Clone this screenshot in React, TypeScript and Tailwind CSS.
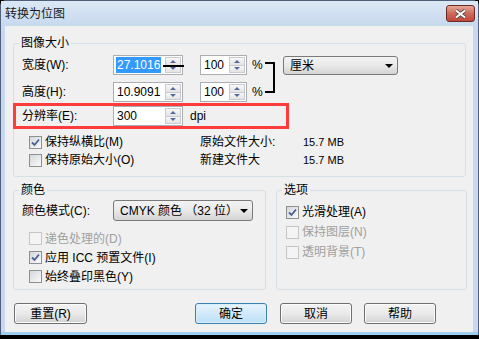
import React from 'react';

const font = "font-['Liberation_Sans','Noto_Sans_CJK_SC',sans-serif]";

function Spin() {
  return (
    <div className="flex flex-col w-[17px] h-full py-[1px] pr-[1px]">
      <div className="flex-1 flex items-center justify-center border border-[#c8cbd0] bg-gradient-to-b from-[#f7f7f7] to-[#e4e4e4]">
        <span className="w-0 h-0 border-x-[3px] border-x-transparent border-b-[3px] border-b-[#56699a]" />
      </div>
      <div className="flex-1 flex items-center justify-center border border-t-0 border-[#c8cbd0] bg-gradient-to-b from-[#f7f7f7] to-[#e4e4e4]">
        <span className="w-0 h-0 border-x-[3px] border-x-transparent border-t-[3px] border-t-[#56699a]" />
      </div>
    </div>
  );
}

function NumBox({ value, width, selected, link }: { value: string; width: string; selected?: boolean; link?: boolean }) {
  return (
    <div className={`relative flex h-[20px] border border-[#abadb3] bg-white ${width}`}>
      <div className="flex-1 flex items-center pl-[2px]">
        {selected ? (
          <span className="bg-[#3399ff] text-white px-[1px] py-[2px]">{value}</span>
        ) : (
          <span className="px-[1px]">{value}</span>
        )}
      </div>
      <Spin />
      {link && <div className="absolute left-[49px] top-[9px] w-[21px] h-[2px] bg-black" />}
    </div>
  );
}

function Select({ text, className }: { text: string; className: string }) {
  return (
    <div className={`flex items-center justify-between pl-[6px] pr-[4px] border border-[#7a7a7a] rounded-[3px] bg-gradient-to-b from-[#f3f3f3] via-[#e9e9e9] to-[#d4d4d4] ${className}`}>
      <span>{text}</span>
      <span className="w-0 h-0 border-x-[4px] border-x-transparent border-t-[4px] border-t-black" />
    </div>
  );
}

function Check({ checked, disabled }: { checked?: boolean; disabled?: boolean }) {
  return (
    <span
      className={`w-[13px] h-[13px] border flex items-center justify-center shrink-0 ${
        disabled
          ? 'border-[#c5c5c5] bg-[#f4f4f4]'
          : 'border-[#8e8f8f] bg-gradient-to-br from-[#d4d7dc] to-[#fafafa]'
      }`}
    >
      {checked && (
        <svg width="11" height="11" viewBox="0 0 11 11">
          <path d="M2 5.5 L4.5 8 L9 2.5" fill="none" stroke="#4a5f94" strokeWidth="1.8" />
        </svg>
      )}
    </span>
  );
}

function CheckRow({ label, checked, disabled, h }: { label: string; checked?: boolean; disabled?: boolean; h: string }) {
  return (
    <div className={`flex items-center ${h}`}>
      <Check checked={checked} disabled={disabled} />
      <span className={`ml-[3px] ${disabled ? 'text-[#a0a0a0]' : ''}`}>{label}</span>
    </div>
  );
}

function Group({ title, className, children }: { title: string; className: string; children: React.ReactNode }) {
  return (
    <fieldset className={`rounded-[3px] border border-[#d5dfe5] shrink-0 ${className}`}>
      <legend className="ml-[5px] px-[2px] leading-[16px]">{title}</legend>
      {children}
    </fieldset>
  );
}

function Btn({ children, primary, className }: { children: React.ReactNode; primary?: boolean; className: string }) {
  return (
    <button
      className={`w-[72px] h-[21px] rounded-[3px] border flex items-center justify-center ${
        primary
          ? 'border-[#3c7fb1] bg-gradient-to-b from-[#e8f4fd] to-[#bcdff6] shadow-[inset_0_0_0_1px_#d8f0fc]'
          : 'border-[#707070] bg-gradient-to-b from-[#f3f3f3] via-[#eaeaea] to-[#d2d2d2] shadow-[inset_0_0_0_1px_#fbfbfb]'
      } ${className}`}
    >
      {children}
    </button>
  );
}

export default function App() {
  return (
    <div className={`w-[479px] h-[339px] flex flex-col overflow-hidden bg-black text-[12px] leading-none text-black ${font}`}>
      <div className="flex-1 flex flex-col rounded-t-[6px] border-x border-t border-[#50607a] bg-[#c7d9ee]">
        <div className="h-[25px] flex items-center justify-between pl-[4px] pr-[3px] bg-gradient-to-b from-[#dce8f5] to-[#c6d9ee]">
          <span className="text-[12px] text-[#1a1a1a]">转换为位图</span>
          <div className="w-[29px] h-[17px] rounded-[3px] border border-[#6e2a25] bg-gradient-to-b from-[#e6a898] via-[#cf6a5a] to-[#c0473a] flex items-center justify-center">
            <svg width="13" height="10" viewBox="0 0 13 10">
              <path d="M2 1.5 L11 8.5 M11 1.5 L2 8.5" stroke="#4a4a4a" strokeWidth="3.6" />
              <path d="M2 1.5 L11 8.5 M11 1.5 L2 8.5" stroke="#ffffff" strokeWidth="2" />
            </svg>
          </div>
        </div>

        <div className="flex-1 flex pl-[4px] pr-[5px]">
          <div className="flex-1 flex flex-col bg-[#f0f0f0] pl-[8px] pt-[9px]">
            <Group title="图像大小" className="w-[453px] h-[142px]">
              <div className="pl-[8px] pt-[4px]">
                <div className="flex">
                  <div className="flex flex-col gap-[7px]">
                    <div className="flex items-center h-[20px]">
                      <span className="w-[91px]">宽度(W):</span>
                      <NumBox value="27.1016" width="w-[70px]" selected link />
                      <span className="w-[17px]" />
                      <NumBox value="100" width="w-[47px]" />
                      <span className="ml-[5px] w-[13px]">%</span>
                    </div>
                    <div className="flex items-center h-[20px]">
                      <span className="w-[91px]">高度(H):</span>
                      <NumBox value="10.9091" width="w-[70px]" />
                      <span className="w-[17px]" />
                      <NumBox value="100" width="w-[47px]" />
                      <span className="ml-[5px] w-[13px]">%</span>
                    </div>
                  </div>
                  <div className="mt-[7px] w-[10px] h-[31px] border-y-2 border-r-2 border-black" />
                  <Select text="厘米" className="ml-[8px] mt-[1px] w-[115px] h-[19px]" />
                </div>

                <div className="mt-[1px] -ml-[9px] w-[276px] h-[26px] border-[3px] border-[#ff3b3b] flex items-center pl-[6px]">
                  <span className="w-[91px]">分辨率(E):</span>
                  <NumBox value="300" width="w-[70px]" />
                  <span className="ml-[7px]">dpi</span>
                </div>

                <div className="mt-[4px] flex flex-col">
                  <div className="flex items-center h-[18px]">
                    <div className="w-[178px] pl-[7px] flex items-center">
                      <Check checked />
                      <span className="ml-[3px]">保持纵横比(M)</span>
                    </div>
                    <span className="w-[103px]">原始文件大小:</span>
                    <span className="text-[11px]">15.7 MB</span>
                  </div>
                  <div className="flex items-center h-[18px]">
                    <div className="w-[178px] pl-[7px] flex items-center">
                      <Check />
                      <span className="ml-[3px]">保持原始大小(O)</span>
                    </div>
                    <span className="w-[103px]">新建文件大</span>
                    <span className="text-[11px]">15.7 MB</span>
                  </div>
                </div>
              </div>
            </Group>

            <div className="flex mt-[5px]">
              <Group title="颜色" className="w-[253px] h-[108px]">
                <div className="pl-[8px] pt-[2px]">
                  <div className="flex items-center h-[21px]">
                    <span className="w-[91px]">颜色模式(C):</span>
                    <Select text="CMYK 颜色 （32 位）" className="w-[140px] h-[21px]" />
                  </div>
                  <div className="mt-[8px] pl-[7px] flex flex-col">
                    <CheckRow label="递色处理的(D)" disabled h="h-[19px]" />
                    <CheckRow label="应用 ICC 预置文件(I)" checked h="h-[19px]" />
                    <CheckRow label="始终叠印黑色(Y)" h="h-[19px]" />
                  </div>
                </div>
              </Group>
              <Group title="选项" className="ml-[10px] w-[191px] h-[108px]">
                <div className="pl-[9px] pt-[4px] flex flex-col">
                  <CheckRow label="光滑处理(A)" checked h="h-[20px]" />
                  <CheckRow label="保持图层(N)" disabled h="h-[20px]" />
                  <CheckRow label="透明背景(T)" disabled h="h-[20px]" />
                </div>
              </Group>
            </div>

            <div className="flex mt-[13px]">
              <Btn className="ml-[1px] w-[73px]">重置(R)</Btn>
              <Btn primary className="ml-[108px]">确定</Btn>
              <Btn className="ml-[13px]">取消</Btn>
              <Btn className="ml-[12px]">帮助</Btn>
            </div>
          </div>
        </div>
        <div className="h-[3px] bg-[#9fcfee]" />
      </div>
      <div className="h-[4px]" />
    </div>
  );
}
